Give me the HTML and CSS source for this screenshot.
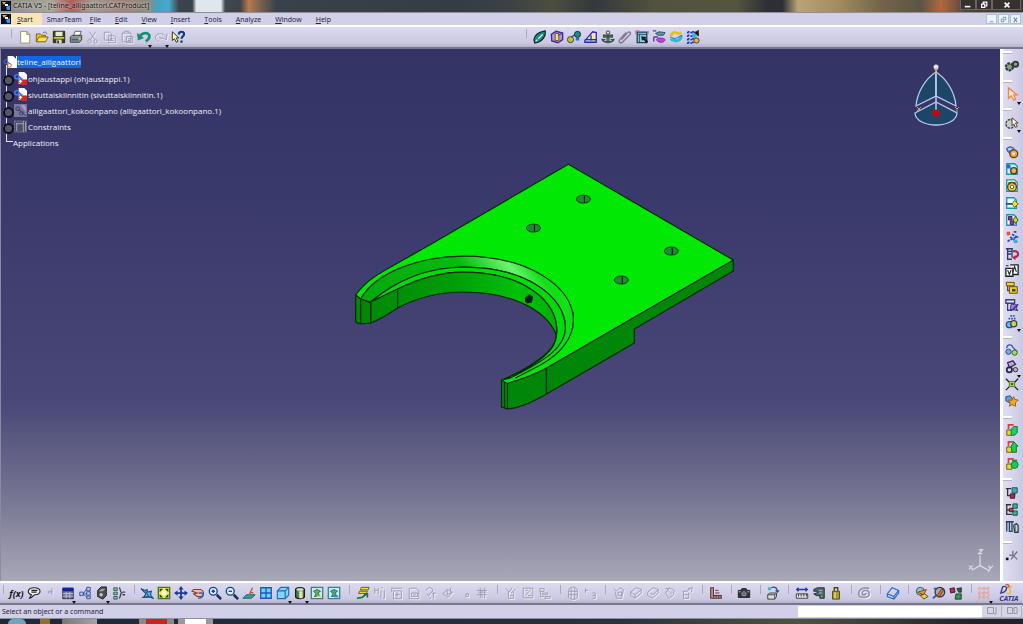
FILE: index.html
```html
<!DOCTYPE html>
<html lang="en">
<head>
    <meta charset="UTF-8">
    <meta name="viewport" content="width=device-width, initial-scale=1.0">
    <title>CATIA V5 - [teline_alligaattori.CATProduct]</title>
    <link rel="stylesheet" href="styles.css">
</head>
<body>
    <header class="titlebar">
        <svg class="app-icon" viewBox="0 0 10 10"><path fill="#07101f" d="M0 0h10v10H0z"/><path fill="#f5a43c" d="M1 1h4L3 4z"/><path fill="#fff" d="M4 3h3v2H4z"/><path fill="#3d8fe0" d="M5 6l4-2v5H6z"/></svg>
        <span class="title">CATIA V5 - [teline_alligaattori.CATProduct]</span>
        <div class="window-buttons">
            <button aria-label="Minimize"><svg viewBox="0 0 10 10"><path fill="#fff" d="M1 6h7v2H1z"/></svg></button>
            <button aria-label="Restore"><svg viewBox="0 0 10 10"><path fill="none" stroke="#fff" stroke-width="1.5" d="M2 4h4v4H2zM4 3V1.500h4.500V6H7"/></svg></button>
            <button class="close" aria-label="Close"><svg viewBox="0 0 10 10"><path stroke="#fff" stroke-width="2" d="M2 2l6 6M8 2L2 8"/></svg></button>
        </div>
    </header>

    <nav class="menubar">
        <svg class="app-icon" viewBox="0 0 10 10"><path fill="#07101f" d="M0 0h10v10H0z"/><path fill="#f5a43c" d="M1 1h5L3 4z"/><path fill="#fff" d="M4 3h3v2H4z"/><path fill="#3d8fe0" d="M5 6l4-2v5H6z"/></svg>
        <button class="menu active"><u>S</u>tart</button>
        <button class="menu wide">SmarTeam</button>
        <button class="menu"><u>F</u>ile</button>
        <button class="menu"><u>E</u>dit</button>
        <button class="menu"><u>V</u>iew</button>
        <button class="menu"><u>I</u>nsert</button>
        <button class="menu"><u>T</u>ools</button>
        <button class="menu"><u>A</u>nalyze</button>
        <button class="menu"><u>W</u>indow</button>
        <button class="menu"><u>H</u>elp</button>
        <div class="mdi-buttons">
            <button aria-label="Minimize document"><svg viewBox="0 0 10 10"><path fill="#6f8fae" d="M3 7h4v1H3z"/></svg></button>
            <button aria-label="Restore document"><svg viewBox="0 0 10 10"><path fill="none" stroke="#6f8fae" d="M2.500 4.500h3v3h-3zM4.500 3V2.500h3v3H7"/></svg></button>
            <button aria-label="Close document"><svg viewBox="0 0 10 10"><path stroke="#6f8fae" stroke-width="1.300" d="M3 3l4 5M7 3L3 8"/></svg></button>
        </div>
    </nav>

    <div class="toolbar top">
        <div class="group">
            <button class="tool" aria-label="New"><svg viewBox="0 0 16 16"><path fill="#fffef0" stroke="#8d8a5c" d="M3 1.500h7l3.500 3.500v10H3z"/><path fill="#d9d7a0" stroke="#8d8a5c" d="M10 1.500V5h3.500"/></svg></button>
            <button class="tool" aria-label="Open"><svg viewBox="0 0 16 16"><path fill="#f2c21c" stroke="#6d5a0c" d="M1.500 13V4.500H6L7.500 6H12v7z"/><path fill="#ffe25c" stroke="#6d5a0c" d="M1.500 13.500L4.500 8H15l-3 5.500z"/><path fill="none" stroke="#6d5a0c" d="M9 3.500c2-2 4-1 4.500 1"/></svg></button>
            <button class="tool" aria-label="Save"><svg viewBox="0 0 16 16"><path fill="#3c3f1e" stroke="#22240c" d="M1.500 1.500h13v13h-13z"/><path fill="#e8ead0" d="M4 2h8v5H4z"/><path fill="#c6cf38" d="M2 8h12v2H2z"/><path fill="#ddd" d="M5 11h6v4H5z"/><path fill="#333" d="M6 12h2v3H6z"/></svg></button>
            <button class="tool" aria-label="Print"><svg viewBox="0 0 16 16"><path fill="#fff" stroke="#555" d="M5 7l2-5.500h7L12 7z"/><path fill="#8c9a8b" stroke="#333" d="M1.500 8L4 6h10.500v5L12 14H1.500z"/><path fill="#3f5da8" d="M3 10h8v2H3z"/><path fill="#e0dc3c" d="M11 9h2v2h-2z"/></svg></button>
            <button class="tool off" disabled aria-label="Cut"><svg viewBox="0 0 16 16"><path d="M4 2l6 9M11 2L5 11"/><circle cx="4" cy="13" r="2"/><circle cx="11" cy="13" r="2"/></svg></button>
            <button class="tool off" disabled aria-label="Copy"><svg viewBox="0 0 16 16"><path d="M1.500 2.500h6l2 2v7h-8zM6.500 6.500h6l2 2v6h-8zM8 10h4M8 12h4"/></svg></button>
            <button class="tool off" disabled aria-label="Paste"><svg viewBox="0 0 16 16"><path d="M2.500 3.500h10v10h-10zM5 3V1.500h5V4M7.500 7.500h7v7h-7zM9 10h4M9 12h3"/></svg></button>
            <button class="tool more" aria-label="Undo"><svg viewBox="0 0 16 16"><path fill="none" stroke="#10926c" stroke-width="3" d="M3 8c2-5 9-6 11-2 1 3-1 5-4 7"/><path fill="#10926c" d="M0 3l1 9 7-3z"/></svg></button>
            <button class="tool off more" disabled aria-label="Redo"><svg viewBox="0 0 16 16"><path d="M13 8C11 3 4 3 2 7c-1 3 1 5 4 6M15 4l-1 7-5-2M6 8l3 2"/></svg></button>
            <button class="tool" aria-label="What's This?"><svg viewBox="0 0 16 16"><path fill="#fff8a0" stroke="#222" d="M1.500 2v10l2.500-2 2 4 2-1-2-4h3z"/><path fill="none" stroke="#123c78" stroke-width="2.500" d="M9 5c0-4 6-4 6 0 0 2-3 2-3 5M12 12v2.500"/></svg></button>
        </div>
        <div class="group">
            <button class="tool" aria-label="Manipulate"><svg viewBox="0 0 16 16"><path fill="#1d8a7e" stroke="#123" stroke-width="1.300" d="M1 11C2 6 7 2 14 1c1 6-3 11-8 13l-4 1z"/><path fill="none" stroke="#e6f2ee" stroke-width="1.500" d="M6 10l5-5M3 13l2-2"/></svg></button>
            <button class="tool" aria-label="Part"><svg viewBox="0 0 16 16"><path fill="#a79be0" stroke="#3a2a9c" stroke-width="1.500" d="M1.500 5L7 1.500l7.500 2V11L9 14.500l-7-2z"/><path fill="#ffe45e" stroke="#6b4f10" d="M6 4h4v8H6z"/><path stroke="#3a2a9c" d="M14 4L9 6"/></svg></button>
            <button class="tool" aria-label="Assembly link"><svg viewBox="0 0 16 16"><path fill="none" stroke="#345" stroke-width="1.500" d="M4 10c2-5 4-3 7-5"/><circle cx="4" cy="11" r="3.500" fill="#b7c73a" stroke="#333"/><circle cx="12" cy="5" r="3.500" fill="#1c8c88" stroke="#123"/><path fill="#2a6bd0" d="M10 9h4v3h-4z"/></svg></button>
            <button class="tool" aria-label="Offset constraint"><svg viewBox="0 0 16 16"><path fill="#ffe98a" stroke="#1c2fc0" stroke-width="1.500" d="M2 11L10 2l4 1v8z"/><path fill="none" stroke="#1c2fc0" stroke-width="1.500" d="M1 11v3h13v-3M8 6v6"/></svg></button>
            <button class="tool" aria-label="Fix component"><svg viewBox="0 0 16 16"><circle cx="8" cy="3" r="2" fill="#d7e4b0" stroke="#243c2c"/><path fill="none" stroke="#35504a" stroke-width="1.500" d="M7 5v10M9 5v10M3 6h10v2H3zM1 10c1 4 4 4 7 4s6 0 7-4M1 11h4M11 11h4"/></svg></button>
            <button class="tool" aria-label="Fix together"><svg viewBox="0 0 16 16"><path fill="none" stroke="#77778a" stroke-width="1.500" d="M4 11l7-8c2-2 4 0 3 2l-9 9c-2 2-5 0-3-3l7-8"/></svg></button>
            <button class="tool" aria-label="Quick constraint"><svg viewBox="0 0 16 16"><path fill="#8acddc" stroke="#23405c" stroke-width="1.500" d="M2.500 2.500h11v12h-11z"/><path fill="none" stroke="#cc4894" d="M1 1h4M1 1v4M15 1v4"/><path fill="none" stroke="#23405c" d="M3 5h10M5 5v9"/><path fill="#0a1830" d="M7 7l1 5 2-1 3 4 2-2-3-3 1-2z"/></svg></button>
            <button class="tool" aria-label="Change constraint"><svg viewBox="0 0 16 16"><path fill="#6a90a8" stroke="#345" d="M4 4l4-2 7 1-2 3-6 0z"/><path fill="#c044dc" stroke="#7a2090" d="M5 11c2-3 8-2 10 0-1 4-8 4-10 0z"/><path stroke="#6a30b0" stroke-width="1.500" d="M1 1h4M2 8h5M2 8v5"/></svg></button>
            <button class="tool" aria-label="Update all"><svg viewBox="0 0 16 16"><path fill="none" stroke="#e8be18" stroke-width="3" d="M2 7c1-4 4-5 6-4s3 2 6 0"/><path fill="none" stroke="#2cbada" stroke-width="3.500" d="M2 12c3-3 4 2 8 0 3-1 4-3 4-6"/><path fill="none" stroke="#1a7fa0" d="M1 8l6 2 8-4"/></svg></button>
            <button class="tool" aria-label="Reuse pattern"><svg viewBox="0 0 16 16"><path fill="none" stroke="#1a3ac4" stroke-width="2" stroke-dasharray="2 2" d="M1 3h13M1 7h10M1 11h8M1 15h7M3 1v14M8 1v14"/><path fill="#36b8d2" d="M7 4h5v5H7z"/><circle cx="12" cy="12" r="3" fill="#f0b040" stroke="#333"/><path stroke="#333" stroke-width="1.500" d="M10 3l4-2v6"/></svg></button>
        </div>
    </div>

    <main class="workspace">
        <section class="viewport">
            <svg class="model" viewBox="0 49 1000 532" role="img" aria-label="Green fork bracket with four holes">
                <defs>
                    <linearGradient id="groove" gradientUnits="userSpaceOnUse" x1="360" y1="300" x2="500" y2="200">
                        <stop offset="0" stop-color="#00a80a"/>
                        <stop offset=".6" stop-color="#06bb10"/>
                        <stop offset=".82" stop-color="#6cf56c"/>
                        <stop offset=".93" stop-color="#14de18"/>
                        <stop offset="1" stop-color="#00ec08"/>
                    </linearGradient>
                    <linearGradient id="wall" x1="0" x2="1">
                        <stop offset="0" stop-color="#008a06"/>
                        <stop offset=".45" stop-color="#009d08"/>
                        <stop offset=".8" stop-color="#00c208"/>
                        <stop offset="1" stop-color="#00b008"/>
                    </linearGradient>
                </defs>
                <!-- outer sides -->
                <path class="side" d="M733 260V271L634 329V343L546 394Q522 408 507 409L501 407V380L507 383Q527 378 546 368Z"/>
                <!-- top face -->
                <path class="top-face" d="M568 164L733 260L546 368Q527 378 507 383L502 380C525 370 556 352 556 335C560 270 430 250 370 302L360 299L355 295C360 288 367 280 383 271L436 241Z"/>
                <!-- chamfered ring -->
                <path class="ring" d="M360 299C375 272 420 256 463 256C525 256 573 285 573 320L565 328C565 295 523 267 463 267C428 268 397 279 370 302Z"/>
                <path class="ring-lower" d="M572 311L573 320C573 338 560 354 540 365L507 383L502 380C535 367 565 350 565 328L563 318Z"/>
                <path class="lip" d="M370 302C397 279 428 267 463 267C523 267 565 295 565 328C565 347 546 360 510 378L502 380C533 367 556 351 556 335C560 300 520 272 463 272C435 272 413 281 397 289Z"/>
                <path class="edge" d="M572 311Q573 315 573 320C573 338 560 354 540 365L515 378"/>
                <!-- inner wall -->
                <path class="wall" d="M370 302L397 289C413 281 435 272 463 272C520 272 560 300 556 335C545 308 508 292 463 292C436 292 414 299 397 308Q379 320 370 323Z"/>
                <path class="side" d="M355 295L360 299L370 303V323L360 324L355 322Z"/>
                <path class="edge" d="M360 299V324M397 289V308M504 382V408M507 383V409M546 368V394"/>
                <g class="hole">
                    <ellipse cx="583" cy="199" rx="7" ry="4"/>
                    <ellipse cx="533" cy="228" rx="7" ry="4"/>
                    <ellipse cx="671" cy="251" rx="7" ry="4"/>
                    <ellipse cx="621" cy="280" rx="7" ry="4"/>
                    <path d="M584 195v8M534 224v8M672 247v8M622 276v8"/>
                </g>
                <path fill="#06103c" stroke="#000820" d="M525 298l4-3 3 2-1 5-4 1-2-2z"/>
            </svg>

            <ul class="tree">
                <li class="root"><svg viewBox="0 0 14 14"><path fill="#fff" d="M5 0h6l3 3v10H5z"/><circle cx="3" cy="6" r="2" fill="none" stroke="#3b76e8"/><circle cx="7" cy="10" r="2" fill="none" stroke="#9c6430"/><path stroke="#3b76e8" d="M5 6l3 3"/></svg><span class="selected">teline_alligaattori</span></li>
                <li><i class="node"></i><svg viewBox="0 0 14 14"><path fill="#fff" d="M5 0h6l3 3v10H5z"/><path fill="#cf2a20" d="M7 8h7v6H7z"/><circle cx="3" cy="5" r="2.200" fill="none" stroke="#3b86ff" stroke-width="1.500"/><circle cx="7" cy="10" r="2" fill="#fff" stroke="#a84820"/><path stroke="#3b76e8" stroke-width="2" d="M5 5l4 3"/></svg><span>ohjaustappi (ohjaustappi.1)</span></li>
                <li><i class="node"></i><svg viewBox="0 0 14 14"><path fill="#fff" d="M5 0h6l3 3v10H5z"/><path fill="#cf2a20" d="M7 8h7v6H7z"/><circle cx="3" cy="5" r="2.200" fill="none" stroke="#3b86ff" stroke-width="1.500"/><circle cx="7" cy="10" r="2" fill="#fff" stroke="#a84820"/><path stroke="#3b76e8" stroke-width="2" d="M5 5l4 3"/></svg><span>sivuttaiskiinnitin (sivuttaiskiinnitin.1)</span></li>
                <li><i class="node"></i><svg viewBox="0 0 14 14"><path fill="#77789a" d="M0 0h14v14H0z"/><path fill="#a2a2bc" d="M7 1h4l2 3v5z"/><circle cx="4" cy="5" r="2" fill="none" stroke="#33386c"/><circle cx="8" cy="10" r="2" fill="none" stroke="#33386c"/><path stroke="#33386c" d="M5 6l8 7"/></svg><span>alligaattori_kokoonpano (alligaattori_kokoonpano.1)</span></li>
                <li><i class="node"></i><svg viewBox="0 0 14 14"><path fill="#4a4c70" stroke="#7d8098" stroke-dasharray="2 1" d="M.5 1h13v12H.5z"/><path fill="none" stroke="#a5b0a8" d="M2 4h8M3 3v9M10 1v12M12.500 2v10"/></svg><span>Constraints</span></li>
                <li class="last"><span>Applications</span></li>
            </ul>

            <svg class="compass" viewBox="0 0 46 66" role="img" aria-label="Compass">
                <g fill="#1d4666" stroke="#b9c8ef" stroke-width="1.300">
                    <path d="M23 9C12 16 4 30 3 43L23 33Z"/>
                    <path d="M23 9C34 16 42 30 43 43L23 33Z"/>
                    <path d="M2 50L23 39L44 50C43 66 3 66 2 50Z"/>
                    <path d="M23 5V47" stroke-width="1.500"/>
                </g>
                <circle cx="23" cy="4" r="2.500" fill="#f0dcf0"/>
                <circle cx="23" cy="50" r="3.500" fill="#d20014"/>
                <path fill="none" stroke="#b7a860" d="M21 6h4l-4 4h4M4 44l4 4M8 44l-4 4M42 44l2 2 2-2M44 46v3"/>
            </svg>

            <svg class="axis" viewBox="0 0 28 26" role="img" aria-label="Axis system">
                <path fill="none" stroke="#dcdcea" stroke-width="1.300" d="M13 7V18L4 23M13 18L22 23M11.500 1h4l-4 4h4M1 18l4 4M5 18l-4 4M22 18l2 3 3-3M24 21l-2 4"/>
            </svg>
        </section>

        <aside class="sidebar">
            <div class="group">
                <button class="tool" aria-label="Assembly design"><svg viewBox="0 0 16 16"><circle cx="5" cy="9" r="4" fill="#8d9d90" stroke="#2d3a30" stroke-width="2.500" stroke-dasharray="3 1"/><circle cx="12" cy="6" r="3" fill="#8d9d90" stroke="#2d3a30" stroke-width="2"/></svg></button>
            </div>
            <div class="group">
                <button class="tool more" aria-label="Select"><svg viewBox="0 0 16 16"><path fill="#ffe9d8" stroke="#e88a4a" stroke-width="1.500" d="M4 1v12l3-3 3 5 2-1-2-5h4z"/></svg></button>
            </div>
            <div class="group">
                <button class="tool more" aria-label="Selection sets"><svg viewBox="0 0 16 16"><circle cx="6" cy="9" r="5" fill="#c8ccd0" stroke="#444" stroke-width="1.500" stroke-dasharray="3 1"/><path fill="#fffdd8" stroke="#333" d="M8 2v9l2-2 2 4 2-1-2-4h3z"/></svg></button>
            </div>
            <div class="group">
                <button class="tool" aria-label="Component"><svg viewBox="0 0 16 16"><path fill="#b8d4f0" stroke="#2c60c0" stroke-width="1.500" d="M2 4l4-2 4 2-3 3-4 0zM4 8l3 3"/><circle cx="10" cy="10" r="4.500" fill="#e8a648" stroke="#6a3c10" stroke-width="1.500"/><circle cx="10" cy="10" r="1.500" fill="#fff"/></svg></button>
                <button class="tool" aria-label="New product"><svg viewBox="0 0 16 16"><path fill="#c8f4fc" stroke="#1795ae" stroke-width="1.500" d="M2 2h9l3 3v9H2z"/><circle cx="10" cy="10" r="3.500" fill="#e8b850" stroke="#4c3c18" stroke-width="1.500"/><circle cx="4" cy="5" r="2.500" fill="#2f68d0"/><path stroke="#2f68d0" stroke-width="1.500" d="M4 5l4 4"/></svg></button>
                <button class="tool" aria-label="New part"><svg viewBox="0 0 16 16"><path fill="#f8fbd8" stroke="#1f94a0" stroke-width="1.500" d="M2 1h9l3 3v10H2z"/><circle cx="8" cy="9" r="5" fill="#e9ce54" stroke="#504610" stroke-width="1.500"/><circle cx="8" cy="9" r="2" fill="#fff" stroke="#504610"/><path stroke="#504610" stroke-width="2" d="M4 4l2 2M12 4l-2 2"/></svg></button>
                <button class="tool" aria-label="Existing component"><svg viewBox="0 0 16 16"><path fill="#f2ffff" stroke="#1495b0" stroke-width="1.500" d="M2 2h8l3 3v9H2z"/><path stroke="#0e5e80" stroke-width="2" d="M1 9h8"/><path fill="#f0df38" stroke="#4a5a10" d="M11 5l4 4-4 4-3-4z"/></svg></button>
                <button class="tool" aria-label="Existing component with positioning"><svg viewBox="0 0 16 16"><path fill="#eafaff" stroke="#1495b0" stroke-width="1.500" d="M2 2h8l3 3v9H2z"/><path fill="#8c3cb0" stroke="#38163c" d="M4 4h4v4H4zM6 9h4v4H6z"/><path fill="#b8d83c" stroke="#1b4a14" d="M12 4l3 4-3 4-3-4z"/></svg></button>
                <button class="tool" aria-label="Replace component"><svg viewBox="0 0 16 16"><path fill="#eb5030" d="M2 2h4v4H2z"/><path fill="none" stroke="#2b4ec2" stroke-width="2" stroke-dasharray="3 1" d="M8 5l6 3-6 2-5 3M6 8l8 6M10 2h4"/><path fill="#38b0d8" d="M10 11h4v4h-4z"/></svg></button>
                <button class="tool" aria-label="Graph tree reordering"><svg viewBox="0 0 16 16"><path fill="none" stroke="#23406a" stroke-width="1.500" d="M1 2h8M3 2v12h5M3 8h4M8 2v10M3 5h5"/><path fill="none" stroke="#b02c48" stroke-width="2.500" d="M9 5c7-2 8 6 2 7"/><path fill="#b02c48" d="M8 12l4-3v6z"/></svg></button>
                <button class="tool" aria-label="Generate numbering"><svg viewBox="0 0 16 16"><path fill="#fff" stroke="#222" stroke-width="1.500" d="M1 5h8v9H1zM6 1h9v11H9"/><path fill="none" stroke="#222" stroke-width="1.300" d="M9 9l2-6 2 6M3 7l2 5 2-5M1 2h3"/></svg></button>
                <button class="tool" aria-label="Selective load"><svg viewBox="0 0 16 16"><path fill="none" stroke="#5c4c14" stroke-width="1.500" d="M3 3v8h6"/><path fill="#f4d42c" stroke="#4c3c10" d="M1.500 1.500h9v4h-9zM5 6.500h9V14H5z"/><path fill="#4c3c10" d="M8 9h4v3H8z"/></svg></button>
                <button class="tool" aria-label="Manage representations"><svg viewBox="0 0 16 16"><path fill="#dfe2f4" stroke="#344076" stroke-width="1.500" d="M1 2h10v4H1zM3 6v8h5"/><path fill="#9c84de" stroke="#3c2c8c" d="M7 7l7 1-1 6-7-1z"/><path stroke="#3c2c8c" stroke-width="1.500" d="M8 14l7-7M13 14h2"/></svg></button>
                <button class="tool more" aria-label="Multi instantiation"><svg viewBox="0 0 16 16"><circle cx="5" cy="11" r="3.500" fill="#69c4e8" stroke="#28508c" stroke-width="1.500"/><circle cx="10" cy="10" r="3.500" fill="#d8cc68" stroke="#2c5040" stroke-width="1.500"/><path stroke="#2c60c0" stroke-width="2" stroke-dasharray="2 1" d="M4 4h9M6 1h6"/></svg></button>
            </div>
            <div class="group">
                <button class="tool" aria-label="Manipulation"><svg viewBox="0 0 16 16"><path fill="none" stroke="#355cb4" stroke-width="1.500" d="M2 6c0-5 6-5 7-1l5 5"/><circle cx="4" cy="10" r="3" fill="#7fa8ea" stroke="#23407c"/><circle cx="11" cy="11" r="3" fill="#9ddb6c" stroke="#2c5420"/></svg></button>
                <button class="tool more" aria-label="Snap"><svg viewBox="0 0 16 16"><path fill="#b8a8dc" stroke="#382c54" stroke-width="1.500" d="M3 3l6-2 3 4-7 4z"/><circle cx="5" cy="11" r="3" fill="none" stroke="#222a50" stroke-width="2"/><circle cx="12" cy="11" r="2.500" fill="#c8a8c8" stroke="#222"/></svg></button>
                <button class="tool" aria-label="Explode"><svg viewBox="0 0 16 16"><path stroke="#202020" stroke-width="1.500" d="M1 2l4 4M15 2l-4 4M1 15l4-4M15 15l-4-4"/><path fill="#b7dc48" stroke="#48702c" d="M5 5h6v6H5z"/><circle cx="8" cy="8" r="1.500" fill="#226c40"/></svg></button>
                <button class="tool" aria-label="Stop on clash"><svg viewBox="0 0 16 16"><path fill="#5a9fe0" stroke="#274a84" d="M1 3l5-1 3 4-4 4-4-2z"/><path fill="#f0a830" stroke="#8c5c10" d="M10 3l1 3 4 1-3 3 0 4-4-2-3 2 1-4-2-3 4 0z"/></svg></button>
            </div>
            <div class="group">
                <button class="tool" aria-label="Coincidence"><svg viewBox="0 0 16 16"><path fill="none" stroke="#e04038" stroke-width="2" d="M4 7V2h6"/><path fill="#e2da32" stroke="#5c5210" d="M2 8h6v6H2z"/><path fill="#19cf72" stroke="#0f6c30" d="M7 7l3-3h4v7l-3 3H7z"/></svg></button>
                <button class="tool" aria-label="Contact"><svg viewBox="0 0 16 16"><path fill="none" stroke="#e04038" stroke-width="2" d="M4 7V2h6"/><path fill="#e2da32" stroke="#5c5210" d="M2 8h6v6H2z"/><path fill="#19cf52" stroke="#0f6c30" d="M7 7l3-5 5 5-2 0v7H8z"/></svg></button>
                <button class="tool" aria-label="Offset"><svg viewBox="0 0 16 16"><path fill="none" stroke="#e04038" stroke-width="2" d="M4 7V2h6"/><path fill="#e2da32" stroke="#5c5210" d="M2 8h6v6H2z"/><circle cx="11" cy="9" r="4" fill="#19cf52" stroke="#0f6c30"/><path fill="#0f8c38" d="M8 3h6v2H8z"/></svg></button>
            </div>
            <div class="group">
                <button class="tool" aria-label="Split"><svg viewBox="0 0 16 16"><path fill="#46a8ac" stroke="#184c5c" d="M8 2h6v6H8z"/><path fill="#a43046" stroke="#48101c" d="M6 9h5v5H6z"/><path fill="none" stroke="#333" stroke-width="1.500" d="M1 3h6M3 3v8h3M11 8v4"/></svg></button>
                <button class="tool" aria-label="Hole"><svg viewBox="0 0 16 16"><path fill="#3cb494" stroke="#17443c" d="M9 1h5v5H9zM9 9h5v5H9z"/><path fill="#d83844" stroke="#48101c" d="M5 6h4v4H5z"/><path fill="none" stroke="#333" stroke-width="1.500" d="M1 2h6M2 2v11h6M2 8h3"/></svg></button>
                <button class="tool" aria-label="Symmetry"><svg viewBox="0 0 16 16"><path fill="#cad5e0" stroke="#24415c" stroke-width="1.500" d="M1 2h9M2 2v11M5 2v11h3V2M10 6l3-2 2 2v8h-4z"/><path stroke="#7a7a40" d="M12 6v7"/></svg></button>
            </div>
            <div class="group">
                <button class="tool" aria-label="Measure tree"><svg viewBox="0 0 16 16"><path fill="none" stroke="#6c7094" stroke-width="1.500" d="M5 8l5 1 4-5M10 9l4 4M10 9l-3 4M9 3v6"/><path fill="#111" d="M1 11h3v3H1z"/></svg></button>
            </div>
        </aside>
    </main>

    <div class="toolbar bottom">
        <div class="group">
            <button class="tool formula" aria-label="Formula">f(x)</button>
            <button class="tool" aria-label="Comment"><svg viewBox="0 0 16 16"><path fill="#f4f4f4" stroke="#222" stroke-width="1.300" d="M8 2c9 0 9 8 1 8-2 0-2 3-6 4l2-4C-1 8 1 2 8 2zM5 5h7M5 7h6"/></svg></button>
            <button class="tool off" disabled aria-label="Lock"><svg viewBox="0 0 16 16"><path d="M5 6h4v2H5zM9 2v9"/></svg></button>
            <button class="tool more" aria-label="Design table"><svg viewBox="0 0 16 16"><path fill="#6b6e98" stroke="#222650" d="M2 2.500h12v12H2z"/><path fill="#1420a0" d="M2 2h12v4H2z"/><path stroke="#c6c8dc" d="M2 8.500h12M2 11.500h12M6 7v7M10 7v7"/></svg></button>
            <button class="tool" aria-label="Law"><svg viewBox="0 0 16 16"><path fill="#b4ccec" stroke="#34489c" d="M10 1.500h4v4h-4zM10 6.500h4v4h-4zM10 11.500h4v3h-4zM2 7h4v4H2z"/><path fill="none" stroke="#34489c" d="M6 9l4-6M6 9h4M6 9l4 4"/></svg></button>
            <button class="tool more" aria-label="Knowledge inspector"><svg viewBox="0 0 16 16"><path fill="#4c4d52" stroke="#1c1c1c" d="M3 5l4-4h6v10l-4 4-6-3z"/><path fill="#a4a4aa" d="M4 6l4-3h4L9 6z"/><circle cx="7" cy="10" r="2" fill="#c3c3c6"/></svg></button>
            <button class="tool" aria-label="Equivalent dimensions"><svg viewBox="0 0 16 16"><path fill="#8ac0a0" stroke="#2c5c4c" d="M2 2h4v3H2zM2 7h4v3H2zM2 12h4v3H2z"/><path fill="none" stroke="#3c4450" stroke-width="1.500" d="M8 2c2 0 1 5 3 6-2 1-1 6-3 6M12 7h3M12 10h3"/></svg></button>
        </div>
        <div class="group">
            <button class="tool" aria-label="Fly mode"><svg viewBox="0 0 16 16"><path fill="#5cb7dc" stroke="#1c4a80" stroke-width="1.200" d="M1 3l5 2 2-1 1 3 4-1-1 4 3 4-5-2-6 1 3-4z"/><path fill="none" stroke="#1c4a80" d="M2 13h12M6 5l4 7"/></svg></button>
            <button class="tool" aria-label="Fit all in"><svg viewBox="0 0 16 16"><path fill="#f5ec50" stroke="#3e7434" stroke-width="1.500" d="M1.500 1.500h13v13h-13z"/><path fill="#0d4c34" d="M3 3h4L3 7zM13 3v4L9 3zM3 13V9l4 4zM13 13H9l4-4z"/><path fill="#fff" d="M6 6h4v4H6z"/></svg></button>
            <button class="tool" aria-label="Pan"><svg viewBox="0 0 16 16"><path fill="#183c98" d="M8 0l3 4H9v3h3V5l4 3-4 3V9H9v3h2l-3 4-3-4h2V9H4v2L0 8l4-3v2h3V4H5z"/></svg></button>
            <button class="tool" aria-label="Rotate"><svg viewBox="0 0 16 16"><path fill="#f0b9a2" stroke="#8c3830" stroke-width="1.200" d="M3 4h8c4 1 4 5 1 8H7L3 9l4-1-6-2z"/><path fill="none" stroke="#3260a4" stroke-width="1.500" d="M9 8h4M8 14c5 0 7-3 6-7"/></svg></button>
            <button class="tool" aria-label="Zoom in"><svg viewBox="0 0 16 16"><circle cx="6" cy="6" r="4.500" fill="#d5f4ff" stroke="#1c3c88" stroke-width="1.500"/><path stroke="#1c3c88" stroke-width="1.500" d="M4 6h4M6 4v4"/><path stroke="#1b2d60" stroke-width="3" d="M10 10l5 5"/></svg></button>
            <button class="tool" aria-label="Zoom out"><svg viewBox="0 0 16 16"><circle cx="6" cy="6" r="4.500" fill="#d5f4ff" stroke="#1c3c88" stroke-width="1.500"/><path stroke="#1c3c88" stroke-width="1.500" d="M4 6h4"/><path stroke="#1b2d60" stroke-width="3" d="M10 10l5 5"/></svg></button>
            <button class="tool" aria-label="Normal view"><svg viewBox="0 0 16 16"><path fill="#28a69a" stroke="#165c5c" d="M1 14l4-4h10l-4 4z"/><path stroke="#be5a40" stroke-width="1.500" d="M8 11l4-9M9 7l4 1"/></svg></button>
            <button class="tool" aria-label="Create multi-view"><svg viewBox="0 0 16 16"><path fill="#64d8f4" stroke="#2450c4" stroke-width="1.500" d="M2 2h12v12H2zM8 2v12M2 8h12"/></svg></button>
            <button class="tool more" aria-label="Isometric view"><svg viewBox="0 0 16 16"><path fill="#82d4f8" stroke="#2468b8" stroke-width="1.300" d="M1.500 5.500l4-4h9v9l-4 4h-9z"/><path fill="none" stroke="#2468b8" stroke-width="1.300" d="M1.500 5.500h9v9M10.500 5.500l4-4"/></svg></button>
            <button class="tool more" aria-label="Shading with edges"><svg viewBox="0 0 16 16"><path fill="#4c8068" stroke="#142018" stroke-width="1.500" d="M3 4c0-3 10-3 10 0v8c0 3-10 3-10 0z"/><path fill="#e4e2a0" d="M7 6h4v8H7z"/><ellipse cx="8" cy="4" rx="4" ry="1.500" fill="#d8e7c8"/></svg></button>
            <button class="tool" aria-label="Hide or show"><svg viewBox="0 0 16 16"><path fill="#c4eef4" stroke="#487888" stroke-width="1.500" d="M1.500 1.500h13v13h-13z"/><path fill="#65b464" stroke="#365c3c" d="M4 6l4-2 4 2-3 2 2 3-6 1 2-3z"/><path fill="#edd854" d="M8 11h5v2H8z"/></svg></button>
            <button class="tool" aria-label="Swap visible space"><svg viewBox="0 0 16 16"><path fill="#b6f2fa" stroke="#3c8098" stroke-width="1.500" d="M1.500 1.500h13v13h-13z"/><path fill="#48a89c" stroke="#365c3c" d="M4 6l4-2 4 2-3 2 2 3-6 1 2-3z"/><path fill="#5080c0" d="M8 11h5v2H8z"/></svg></button>
        </div>
        <div class="group">
            <button class="tool" aria-label="Catalog"><svg viewBox="0 0 16 16"><path fill="#f2df30" stroke="#5c5310" d="M6 1.500h9l-1 3H5zM4 6h9l-1 2.500H3z"/><path fill="none" stroke="#1f7040" stroke-width="2" d="M1 14l6-1 5-4M9 9h4v4"/></svg></button>
            <button class="tool off" disabled aria-label="Save in database"><svg viewBox="0 0 16 16"><path d="M2 2v7M6 2v7M2 5h4M9 5v9M13 5v9h-2M9 2h2"/></svg></button>
            <button class="tool off" disabled aria-label="Insert from database"><svg viewBox="0 0 16 16"><path d="M2 2.500h12M4 5.500h9v9H4zM8 7v6M6 10h5M2 2v5"/></svg></button>
            <button class="tool off" disabled aria-label="Open from database"><svg viewBox="0 0 16 16"><path d="M2.500 2.500h8l3 3v9h-11zM5 8h7v4H5zM7 10h3"/></svg></button>
            <button class="tool off" disabled aria-label="Object info"><svg viewBox="0 0 16 16"><path d="M3 5c0-4 7-4 7 0 0 3-4 2-4 6M7 13v2M11 7v7M3 9l3 2M9 9l5-1"/></svg></button>
            <button class="tool off" disabled aria-label="Refresh link"><svg viewBox="0 0 16 16"><path d="M2 9l5-5 6 3-5 6zM7 4v6l6-3M11 2v4"/></svg></button>
            <button class="tool off" disabled aria-label="Point"><svg viewBox="0 0 16 16"><path d="M9 9h3v3H9z"/></svg></button>
            <button class="tool off" disabled aria-label="Grid links"><svg viewBox="0 0 16 16"><path d="M2 5h12M2 10h12M6 2v12M11 2v12M4 7h9M8 4v10"/></svg></button>
        </div>
        <div class="group">
            <button class="tool off" disabled aria-label="Check in"><svg viewBox="0 0 16 16"><path d="M2 3l4 4 3-5M5 7v7h6V7M8 8l5-4M7 11h3"/></svg></button>
            <button class="tool off" disabled aria-label="Check out"><svg viewBox="0 0 16 16"><path d="M2.500 2.500h11v11h-11zM5 11l6-7M5 5h3M8 11h4"/></svg></button>
            <button class="tool off" disabled aria-label="Release"><svg viewBox="0 0 16 16"><path d="M2 3h5v3H2zM5 8h6v2H5zM8 12h6v2H8zM3 6v6h4"/></svg></button>
        </div>
        <div class="group">
            <button class="tool off" disabled aria-label="Cage"><svg viewBox="0 0 16 16"><path d="M3 5c1-5 9-5 10 0v8c-2 3-8 3-10 0zM6 2v12M10 2v12M3 6h10M3 10h10"/></svg></button>
            <button class="tool off" disabled aria-label="Lifecycle"><svg viewBox="0 0 16 16"><path d="M3 3v5M2 5h4M11 8h3v6h-3M11 11h3"/></svg></button>
        </div>
        <div class="group">
            <button class="tool off" disabled aria-label="Lock part"><svg viewBox="0 0 16 16"><path d="M2 3l3 3 4-4 4 2-2 10H5L4 7M7 7h4v4H7z"/></svg></button>
            <button class="tool off" disabled aria-label="Tag left"><svg viewBox="0 0 16 16"><path d="M2 7l6-5 6 2v4l-7 6-5-3zM2 7l5 3 7-6M7 10v4"/></svg></button>
            <button class="tool off" disabled aria-label="Tag right"><svg viewBox="0 0 16 16"><path d="M2 7l6-5 6 2v4l-7 6-5-3zM5 8l3 2 6-6"/></svg></button>
            <button class="tool off" disabled aria-label="Tag down"><svg viewBox="0 0 16 16"><path d="M3 3h3v3M7 2l6 3-1 5-5 4-4-6zM7 6l3 3"/></svg></button>
            <button class="tool off" disabled aria-label="Tag remove"><svg viewBox="0 0 16 16"><path d="M3 6h5l5-4M9 3l5-1-1 5M4 6v8h6V8M4 10h6"/></svg></button>
        </div>
        <div class="group">
            <button class="tool" aria-label="Sectioning"><svg viewBox="0 0 16 16"><path fill="#c9a0a0" stroke="#5c3438" stroke-width="1.300" d="M2 2h3v9h9v3H2z"/><path stroke="#5c3438" d="M7 5h4M7 8h5M5 11v3M8 11v3M11 11v3"/></svg></button>
        </div>
        <div class="group">
            <button class="tool" aria-label="Capture"><svg viewBox="0 0 16 16"><path fill="#34373d" stroke="#15171b" d="M1.500 5h3l1-2h5l1 2h3v8h-13z"/><circle cx="8" cy="9" r="2.500" fill="#5e6876" stroke="#999"/><path fill="#bbb" d="M2 6h2v1H2zM12 6h2v1h-2z"/></svg></button>
        </div>
        <div class="group">
            <button class="tool" aria-label="Product update"><svg viewBox="0 0 16 16"><circle cx="4" cy="3" r="2" fill="#38b6d4"/><path fill="none" stroke="#28548c" stroke-width="1.500" d="M6 2c5-2 7 1 7 4M11 5l2 2 2-2"/><path fill="#dcdcdc" stroke="#333" d="M2 10l2-2h8v4l-2 3H2zM2 10h8v5M10 10l2-2"/></svg></button>
        </div>
        <div class="group">
            <button class="tool" aria-label="Measure between"><svg viewBox="0 0 16 16"><path fill="none" stroke="#2136b0" stroke-width="1.500" d="M2 4h12M4 2L2 4l2 2M12 2l2 2-2 2"/><path fill="#e3e3ea" stroke="#333" d="M1.500 9h13v5h-13zM4 9v3M7 9v3M10 9v3M13 9v3"/></svg></button>
            <button class="tool" aria-label="Measure item"><svg viewBox="0 0 16 16"><path fill="#4b6a6c" stroke="#18282c" d="M6 2h8v12H9v-3H5l-3-2 4-1V6H2V4z"/><path fill="none" stroke="#a8c0bc" d="M8 5h4M8 8h4M11 11v2"/></svg></button>
            <button class="tool" aria-label="Measure inertia"><svg viewBox="0 0 16 16"><path fill="none" stroke="#4c4412" stroke-width="1.500" d="M6 6V2h4v4"/><path fill="#a69a2c" stroke="#4c4412" d="M4 6h8v9H4z"/><path fill="#dbcf70" d="M6 7h2v7H6z"/></svg></button>
        </div>
        <div class="group">
            <button class="tool off" disabled aria-label="Update"><svg viewBox="0 0 16 16"><path stroke-width="2" d="M14 3c-5-2-12 0-12 6 0 5 11 6 12 0 0-5-8-5-8-1 0 3 4 3 4 0"/></svg></button>
        </div>
        <div class="group">
            <button class="tool" aria-label="Eraser"><svg viewBox="0 0 16 16"><path fill="#c2dcff" stroke="#3564c8" stroke-width="1.300" d="M1.500 9L7 2l7.500 3L9 12zM1.500 9v3L9 15l5.500-7V5M9 12v3"/></svg></button>
        </div>
        <div class="group">
            <button class="tool" aria-label="Clash"><svg viewBox="0 0 16 16"><circle cx="6" cy="6" r="4.500" fill="#8fc7ce" stroke="#2a4c54"/><path fill="#f0962c" stroke="#803c10" d="M3 7l10-3-3 6z"/><path fill="#e3d44c" stroke="#49440c" d="M6 11l5-2 4 3-5 3z"/></svg></button>
            <button class="tool" aria-label="Sectioning analysis"><svg viewBox="0 0 16 16"><circle cx="9" cy="7" r="5.500" fill="#a3b0b8" stroke="#333c44" stroke-width="1.500"/><path fill="#e87828" stroke="#602c10" d="M6 11l5-8 2 2-5 8z"/><path stroke="#4350a0" stroke-width="2" d="M1 14l5-4M2 3h4"/></svg></button>
            <button class="tool" aria-label="Distance and band analysis"><svg viewBox="0 0 16 16"><path fill="#b82a50" stroke="#48101c" d="M1 3l5-1 1 5-5 1z"/><path fill="#2f9c48" stroke="#123c1c" d="M8 9h6v6H7z"/><path fill="#286c38" stroke="#222" d="M9 3l5-1v5l-3 0z"/></svg></button>
        </div>
        <div class="group">
            <button class="tool more" aria-label="Work on support"><svg viewBox="0 0 16 16"><path fill="none" stroke="#e0a8a4" stroke-width="2" stroke-dasharray="3 1" d="M1 3h13M1 8h13M1 13h13M3 1v14M8 1v14M13 1v14"/></svg></button>
            <div class="brand">
                <svg viewBox="0 0 22 12"><path fill="none" stroke="#3a3c9c" stroke-width="1.500" d="M2 10L4 3c6-2 6 5-2 7z"/><path fill="none" stroke="#e05434" stroke-width="1.500" d="M7 1c5-1 5 2 2 3"/><path fill="none" stroke="#f0b428" stroke-width="1.500" d="M14 3c-5 1-2 3-1 5 0 2-2 3-4 2"/></svg>
                <span>CATIA</span>
            </div>
        </div>
    </div>

    <footer class="statusbar">
        <label for="command">Select an object or a command</label>
        <input id="command" type="text">
        <button aria-label="Power input"><svg viewBox="0 0 12 10"><path fill="none" stroke="#9696ac" d="M1.500 1.500h6v6h-6zM10 1v7H8"/></svg></button>
        <button aria-label="Dialog status"><svg viewBox="0 0 12 10"><path fill="none" stroke="#9696ac" d="M1.500 1.500h5v6h-5zM8 1.500h3v6H8z"/></svg></button>
    </footer>
    <div class="taskbar">
        <span class="orb"></span>
        <span class="task gold"></span>
        <span class="task"></span>
        <span class="task red"></span>
        <span class="task white"></span>
    </div>
</body>
</html>
```

FILE: styles.css
```css
* {
    box-sizing: border-box;
}

body {
    display: flex;
    flex-direction: column;
    height: 100vh;
    margin: 0;
    overflow: hidden;
    background-color: #d2d0e8;
    color: #26263a;
    font-family: "Noto Sans", "Open Sans", sans-serif;
    font-size: 7px;
}

button {
    display: flex;
    align-items: center;
    justify-content: center;
    padding: 0;
    border: none;
    background: none;
    color: inherit;
    font: inherit;
}

svg {
    display: block;
}

.app-icon {
    width: 10px;
    height: 10px;
    flex: none;
}

/* Title bar */
.titlebar {
    display: flex;
    align-items: center;
    gap: 2px;
    height: 13px;
    flex: none;
    padding-left: 1px;
    border-bottom: 1px solid #8f8f98;
    background: linear-gradient(90deg, #8a8a80 0%, #a8a69a 5%, #b05c58 7%, #a09a90 9%, #a08478 12%, #8f8c80 14.5%, #3fa4c8 15.5%, #4ba8c8 16.5%, #3a444c 17.5%, #39434a 18.8%, #dfe6ee 19.2%, #dfe6ee 21.6%, #404850 22%, #424248 23.5%, #b87850 24.3%, #76604c 25.5%, #39424a 27%, #333d46 45%, #3c4244 50%, #4c4e3e 54%, #33383c 58%, #52523e 64%, #54543f 72%, #2c3034 75%, #2c3034 76.5%, #b8a478 78%, #a08c60 82%, #74654a 86%, #5c5444 90%, #b0683c 92%, #8c5a40 93%, #4c4240 94.5%, #3c3838 100%);
}

.title {
    padding: 0 4px 0 0;
    color: #141414;
    font-size: 7px;
    line-height: 12px;
    text-shadow: 0 0 3px #fff;
}

.window-buttons {
    display: flex;
    align-self: flex-start;
    margin-left: auto;
    padding-right: 2px;
}

.window-buttons button {
    width: 16px;
    height: 10px;
    border: 1px solid #6c6462;
    border-top: none;
    background-color: #38302f;
}

.window-buttons .close {
    width: 29px;
}

.window-buttons svg {
    width: 8px;
    height: 8px;
}

/* Menu bar */
.menubar {
    display: flex;
    align-items: center;
    height: 12px;
    flex: none;
    padding: 0 2px 0 1px;
}

.menu {
    height: 12px;
    padding: 0 7px;
    line-height: 11px;
}

.menu.active {
    padding: 0 9px 0 6px;
    background-color: #fbe3b8;
}

.menu.wide {
    padding: 0 1px 0 5px;
}

.menu u {
    text-underline-offset: 1px;
}

.mdi-buttons {
    display: flex;
    gap: 1px;
    margin-left: auto;
}

.mdi-buttons button {
    width: 11px;
    height: 10px;
    border: 1px solid #a9c2d8;
    background-color: #edf3fa;
}

.mdi-buttons svg {
    width: 9px;
    height: 9px;
}

/* Toolbars */
.toolbar {
    display: flex;
    align-items: center;
    height: 24px;
    flex: none;
    border-top: 2px solid #fdfdff;
    border-bottom: 2px solid #77778c;
    background: linear-gradient(#dcdaf0, #cbc9e2 80%, #b4b3cb);
}

.toolbar.top {
    display: grid;
    grid-template-columns: 515fr 508fr;
}

.toolbar.bottom {
    justify-content: space-between;
    padding: 0 4px 0 0;
}

.group {
    display: flex;
    align-items: center;
}

.group::before {
    content: "";
    width: 1px;
    height: 9px;
    margin-right: 4px;
    align-self: flex-start;
    background-color: #a9a8be;
}

.top .group {
    padding-left: 11px;
}

.bottom .group:first-child {
    padding-left: 3px;
}

.tool {
    position: relative;
    width: 17px;
    height: 17px;
    flex: none;
}

.tool svg {
    width: 14px;
    height: 14px;
}

.tool.off svg {
    fill: none;
    stroke: #9897aa;
    filter: drop-shadow(1px 1px 0 #f2f1fb);
}

.tool.more::after {
    content: "";
    position: absolute;
    right: 0;
    bottom: -2px;
    border: 2px solid transparent;
    border-top: 3px solid #111;
    border-bottom: none;
}

.formula {
    color: #111;
    font-size: 9px;
    font-style: italic;
    font-weight: bold;
}

/* Workspace */
.workspace {
    display: flex;
    flex: 1;
    min-height: 0;
}

.viewport {
    position: relative;
    flex: 1;
    min-width: 0;
    border-left: 1px solid #8a8aa0;
    background: linear-gradient(#343366 0%, #3b3a6c 30%, #484777 66%, #72718f 83%, #a9a8b8 100%);
}

.model {
    position: absolute;
    inset: 0;
    width: 100%;
    height: 100%;
}

.model path {
    stroke: #032c06;
    stroke-width: 1.2;
    stroke-linejoin: round;
}

.model .side {
    fill: #008707;
}

.model .top-face {
    fill: #00e803;
}

.model .ring {
    fill: url(#groove);
}

.model .ring-lower {
    fill: #0ce010;
    stroke: none;
}

.model .lip {
    fill: #00dc06;
}

.model .wall {
    fill: url(#wall);
}

.model .edge {
    fill: none;
}

.hole {
    fill: #1f8a38;
    stroke: #063c10;
}

.compass {
    position: absolute;
    top: 14px;
    right: 41px;
    width: 46px;
    height: 66px;
}

.axis {
    position: absolute;
    right: 6px;
    bottom: 8px;
    width: 26px;
    height: 24px;
}

/* Specification tree */
.tree {
    position: relative;
    width: fit-content;
    margin: 0;
    padding: 5px 0 0 2px;
    color: #f0f0fa;
    font-family: "Open Sans", "Noto Sans", sans-serif;
    font-size: 8px;
    list-style: none;
}

.tree::before {
    content: "";
    position: absolute;
    top: 16px;
    bottom: 8px;
    left: 5px;
    width: 6px;
    border: solid #e4e4f0;
    border-width: 0 0 1px 1px;
}

.tree li {
    display: flex;
    align-items: center;
    gap: 1px;
    height: 16px;
}

.tree svg {
    position: relative;
    width: 13px;
    height: 13px;
}

.tree .root {
    gap: 0;
}

.tree .last {
    padding-left: 10px;
}

.selected {
    border-left: 1px solid #fff;
    background-color: #1268e0;
    line-height: 12px;
}

.node {
    position: relative;
    width: 10px;
    height: 1px;
    background-color: #e4e4f0;
}

/* expander handle, centred on the trunk line */
.node::before {
    content: "";
    position: absolute;
    top: -3px;
    left: 0;
    width: 7px;
    height: 7px;
    border: 2px solid #10101c;
    border-radius: 50%;
    background-color: #55556c;
}

/* Right toolbar */
.sidebar {
    display: flex;
    flex-direction: column;
    justify-content: space-between;
    width: 23px;
    flex: none;
    padding: 2px 0 17px;
    border-left: 3px solid #fdfdff;
    background: linear-gradient(90deg, #e0def2, #cbc9e2);
}

.sidebar .group {
    flex-direction: column;
    padding-right: 2px;
}

.sidebar .group::before {
    width: 9px;
    height: 2px;
    margin: 0 0 3px;
    border-bottom: 1px solid #b5b4c8;
    background-color: #fff;
}

/* Brand mark */
.brand {
    display: flex;
    flex-direction: column;
    align-items: center;
    margin-left: 6px;
    color: #34368c;
    font-size: 7px;
    font-style: italic;
    font-weight: bold;
    line-height: 8px;
}

.brand svg {
    width: 20px;
    height: 11px;
}

/* Status bar */
.statusbar {
    display: flex;
    align-items: center;
    height: 14px;
    flex: none;
    padding: 0 1px 0 2px;
    border-bottom: 1px solid #8f8fa0;
}

.statusbar input {
    width: 18%;
    height: 11px;
    margin-left: auto;
    padding: 0 2px;
    border: none;
    background-color: #fff;
    font: inherit;
}

.statusbar button {
    width: 20px;
    height: 12px;
    border: 1px solid #b0afc4;
    border-width: 0 1px 1px 0;
    background-color: #d6d5e2;
}

.statusbar svg {
    width: 12px;
    height: 10px;
}

/* Desktop taskbar */
.taskbar {
    display: flex;
    gap: 4px;
    height: 5px;
    flex: none;
    padding-left: 8px;
    background: linear-gradient(90deg, #1c2a38, #26333c 60%, #4c5440 78%, #20242a 95%);
}

.orb {
    width: 18px;
    border-radius: 9px 9px 0 0;
    background-color: #6fa4bc;
}

.task {
    width: 35px;
    background: linear-gradient(90deg, #777, #a4a4a4);
}

.task.gold {
    width: 10px;
    margin: 0 8px 0 10px;
    background: #8c7424;
}

.task.red {
    margin-left: 38px;
    background: linear-gradient(90deg, #888 20%, #d02020 20%, #d02020 80%, #888 80%);
}

.task.white {
    background: linear-gradient(90deg, #999 20%, #fff 20%, #fff 80%, #999 80%);
}
```
